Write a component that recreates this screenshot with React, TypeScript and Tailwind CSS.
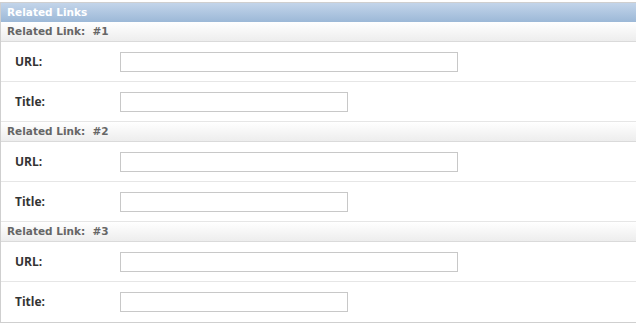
const links = [1, 2, 3];

const Field = ({ label, width, last }: { label: string; width: string; last?: boolean }) => (
  <div className={`flex items-center h-10 ${last ? '' : 'border-b border-[#e6e6e6]'}`}>
    <label className="w-[119px] pl-[14px] font-['Open_Sans',sans-serif] text-[12px] font-bold text-[#333]">{label}</label>
    <input type="text" className={`${width} h-5 border border-[#c8c8c8] bg-white`} />
  </div>
);

const App = () => {
  return (
    <div className="bg-white h-[331px] pt-[2px] overflow-hidden font-['DejaVu_Sans',sans-serif]">
      <div className="border-t border-l border-b border-[#cfcfcf]">
        <div className="h-[19px] flex items-center px-[6px] bg-gradient-to-b from-[#c3d5ea] to-[#9cb8d7] text-white text-[10.5px] font-bold">
          Related Links
        </div>
        {links.map((n, i) => (
          <div key={n}>
            <div className="h-[20px] flex items-center px-[6px] bg-gradient-to-b from-white to-[#ededed] border-b border-[#dadada] text-[#666] text-[10.5px] font-bold">
              Related Link:&nbsp; #{n}
            </div>
            <Field label="URL:" width="w-[338px]" />
            <Field label="Title:" width="w-[228px]" last={i === links.length - 1} />
          </div>
        ))}
      </div>
    </div>
  );
};

export default App;
